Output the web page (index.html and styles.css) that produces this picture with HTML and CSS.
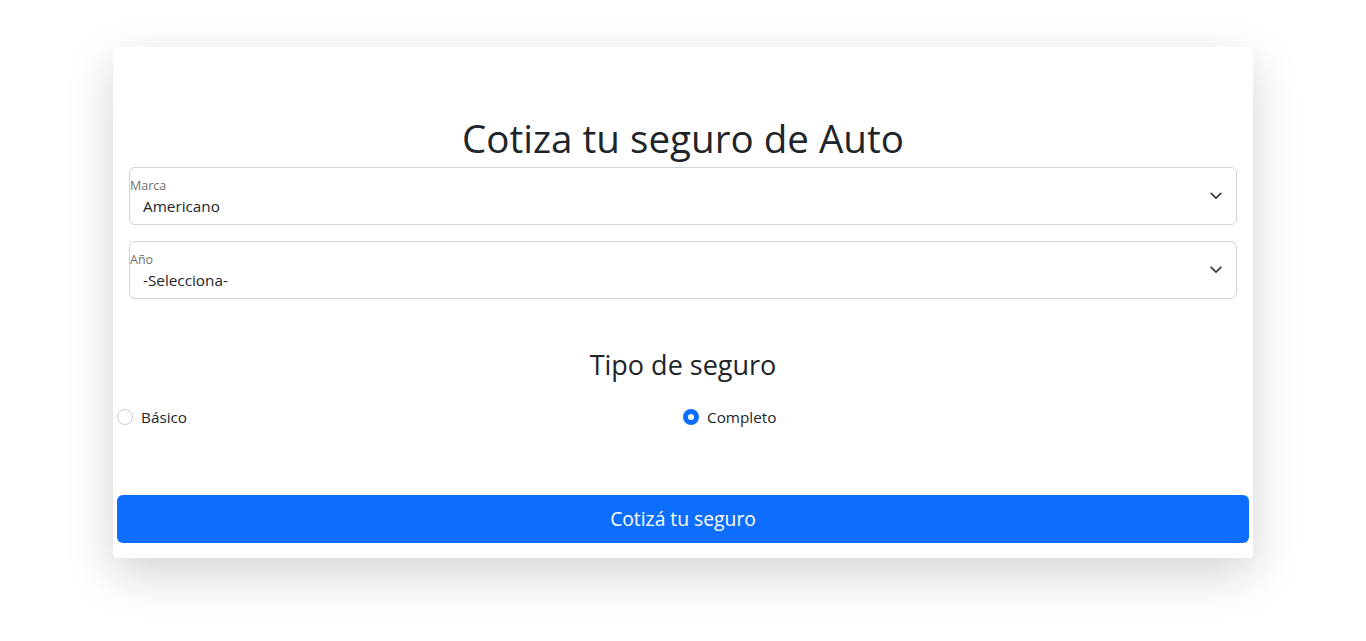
FILE: index.html
```html
<!DOCTYPE html>
<html lang="es">
<head>
<meta charset="utf-8">
<title>Cotiza tu seguro</title>
<link rel="stylesheet" href="styles.css">
</head>
<body>
<main class="page">
  <div class="card">
    <h1 class="title">Cotiza tu seguro de Auto</h1>
    <div class="field">
      <label class="field-label" for="marca">Marca</label>
      <select id="marca" class="field-select">
        <option>Americano</option>
      </select>
      <svg class="chev" viewBox="0 0 12 8" width="12" height="8"><path d="M1.2 1.4 6 6.2l4.8-4.8" fill="none" stroke="#343a40" stroke-width="1.7" stroke-linecap="round" stroke-linejoin="round"/></svg>
    </div>
    <div class="field">
      <label class="field-label" for="anio">Año</label>
      <select id="anio" class="field-select">
        <option>-Selecciona-</option>
      </select>
      <svg class="chev" viewBox="0 0 12 8" width="12" height="8"><path d="M1.2 1.4 6 6.2l4.8-4.8" fill="none" stroke="#343a40" stroke-width="1.7" stroke-linecap="round" stroke-linejoin="round"/></svg>
    </div>
    <h3 class="subtitle">Tipo de seguro</h3>
    <div class="radios">
      <label class="radio"><input type="radio" name="tipo"> <span>Básico</span></label>
      <label class="radio"><input type="radio" name="tipo" checked> <span>Completo</span></label>
    </div>
    <button class="btn" type="button">Cotizá tu seguro</button>
  </div>
</main>
</body>
</html>
```
FILE: styles.css
```css
* { box-sizing: border-box; }
html, body { margin: 0; padding: 0; background: #fff; }
body {
  font-family: "Open Sans", "Noto Sans", sans-serif;
  color: #212529;
  font-size: 15.3px;
  line-height: 1.5;
}
.page { padding: 47px 0 83px; }
.card {
  width: 1140px;
  margin: 0 auto;
  background: #fff;
  border-radius: 4px;
  box-shadow: 0 16px 48px rgba(0, 0, 0, 0.175);
  padding: 4px 4px 15px;
}
.title {
  margin: 63px 0 5px;
  font-size: 38.6px;
  font-weight: 400;
  line-height: 48px;
  text-align: center;
}
.field {
  position: relative;
  margin: 0 12px 16px;
  height: 58px;
  border: 1px solid #ced4da;
  border-radius: 6px;
}
.field-label {
  position: absolute;
  left: 0;
  top: 10px;
  font-size: 12.5px;
  line-height: 16px;
  color: #6f6f6f;
}
.field-select {
  appearance: none;
  -webkit-appearance: none;
  border: 0;
  background: transparent;
  width: 100%;
  height: 100%;
  padding: 26px 40px 6px 13px;
  font: inherit;
  color: #212529;
  outline: none;
}
.chev {
  position: absolute;
  right: 14px;
  top: 24px;
  pointer-events: none;
}
.subtitle {
  margin: 49px 0 22px;
  font-size: 27px;
  font-weight: 400;
  line-height: 34px;
  text-align: center;
}
.radios {
  display: grid;
  grid-template-columns: 1fr 1fr;
  padding-top: 1px;
}
.radio {
  display: flex;
  align-items: center;
  gap: 8px;
  line-height: 24px;
}
.radio input {
  appearance: none;
  -webkit-appearance: none;
  margin: 0;
  width: 16px;
  height: 16px;
  border-radius: 50%;
  border: 1px solid #c9cdd1;
  background: #fff;
}
.radio input:checked {
  border: 5px solid #0d6efd;
  background: #fff;
}
.btn {
  display: block;
  width: 100%;
  margin-top: 66px;
  height: 48px;
  border: 0;
  border-radius: 6px;
  background: #0d6efd;
  color: #fff;
  font: inherit;
  font-size: 19.3px;
}
```
